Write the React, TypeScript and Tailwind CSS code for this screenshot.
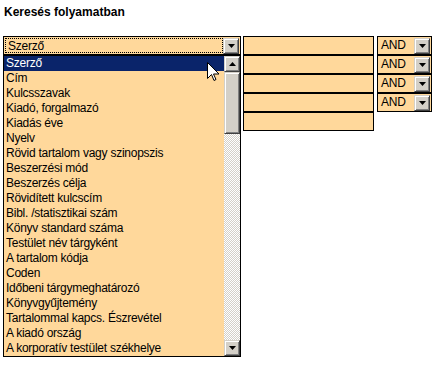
import React from 'react';

const fields = [
  'Szerző',
  'Cím',
  'Kulcsszavak',
  'Kiadó, forgalmazó',
  'Kiadás éve',
  'Nyelv',
  'Rövid tartalom vagy szinopszis',
  'Beszerzési mód',
  'Beszerzés célja',
  'Rövidített kulcscím',
  'Bibl. /statisztikai szám',
  'Könyv standard száma',
  'Testület név tárgyként',
  'A tartalom kódja',
  'Coden',
  'Időbeni tárgymeghatározó',
  'Könyvgyűjtemény',
  'Tartalommal kapcs. Észrevétel',
  'A kiadó ország',
  'A korporatív testület székhelye',
];

const Arrow: React.FC<{ dir: 'up' | 'down' }> = ({ dir }) => (
  <svg width="7" height="4" viewBox="0 0 7 4">
    {dir === 'down' ? <path d="M0 0h7L3.5 4z" fill="#000" /> : <path d="M0 4h7L3.5 0z" fill="#000" />}
  </svg>
);

// old-school 3D gray button
const WinButton: React.FC<{ dir: 'up' | 'down'; className?: string }> = ({ dir, className = '' }) => (
  <div
    className={`w-4 h-4 shrink-0 bg-[#d4d0c8] border border-t-[#d4d0c8] border-l-[#d4d0c8] border-r-[#404040] border-b-[#404040] shadow-[inset_1px_1px_#fff,inset_-1px_-1px_#808080] flex items-center justify-center ${className}`}
  >
    <Arrow dir={dir} />
  </div>
);

const Cursor = () => (
  <svg width="12" height="20" viewBox="0 0 12 20" className="absolute left-[207px] top-[62px]">
    <path
      d="M0.5 0.5v16l4-4 2.5 6 2-1-2.5-5.5h5.5z"
      fill="#fff"
      stroke="#000"
      strokeWidth="1"
      strokeLinejoin="miter"
    />
  </svg>
);

const App: React.FC = () => {
  return (
    <div className="relative w-[441px] h-[365px] bg-white text-black font-['Liberation_Sans',Arial,sans-serif] text-[12px] tracking-[-0.25px]">
      <h1 className="pl-[4px] pt-[5px] text-[12px] leading-[15px] font-bold tracking-normal">Keresés folyamatban</h1>

      <div className="flex items-start pl-[3px] mt-[16px]">
        {/* field selector with open list */}
        <div className="w-[238px] flex flex-col">
          <div className="h-[19px] border border-black bg-[#ffd89b] flex items-center p-px">
            <div className="flex-1 h-full border border-dotted border-black leading-[15px] pl-[2px]">Szerző</div>
            <WinButton dir="down" />
          </div>
          <div className="h-[302px] border border-black bg-[#ffd89b] flex">
            <div className="flex-1">
              {fields.map((f, i) => (
                <div
                  key={f}
                  className={`h-[15px] leading-[15px] pl-[2px] whitespace-nowrap ${i === 0 ? 'bg-[#0a246a] text-white' : ''}`}
                >
                  {f}
                </div>
              ))}
            </div>
            <div className="w-4 flex flex-col bg-[repeating-conic-gradient(#d4d0c8_0_25%,#ffffff_0_50%)] bg-[length:2px_2px]">
              <WinButton dir="up" />
              <div className="h-[62px] bg-[#d4d0c8] border border-t-[#d4d0c8] border-l-[#d4d0c8] border-r-[#404040] border-b-[#404040] shadow-[inset_1px_1px_#fff,inset_-1px_-1px_#808080]" />
              <div className="flex-1" />
              <WinButton dir="down" />
            </div>
          </div>
        </div>

        {/* search terms */}
        <div className="w-[131px] ml-[2px] flex flex-col">
          {[0, 1, 2, 3, 4].map((i) => (
            <div key={i} className="h-[19px] border border-black bg-[#ffd89b]" />
          ))}
        </div>

        {/* operators */}
        <div className="w-[55px] ml-[3px] flex flex-col">
          {[0, 1, 2, 3].map((i) => (
            <div key={i} className="h-[19px] border border-black bg-[#ffd89b] flex items-center p-px">
              <div className="flex-1 leading-[15px] pl-[2px]">AND</div>
              <WinButton dir="down" />
            </div>
          ))}
        </div>
      </div>

      <Cursor />
    </div>
  );
};

export default App;
